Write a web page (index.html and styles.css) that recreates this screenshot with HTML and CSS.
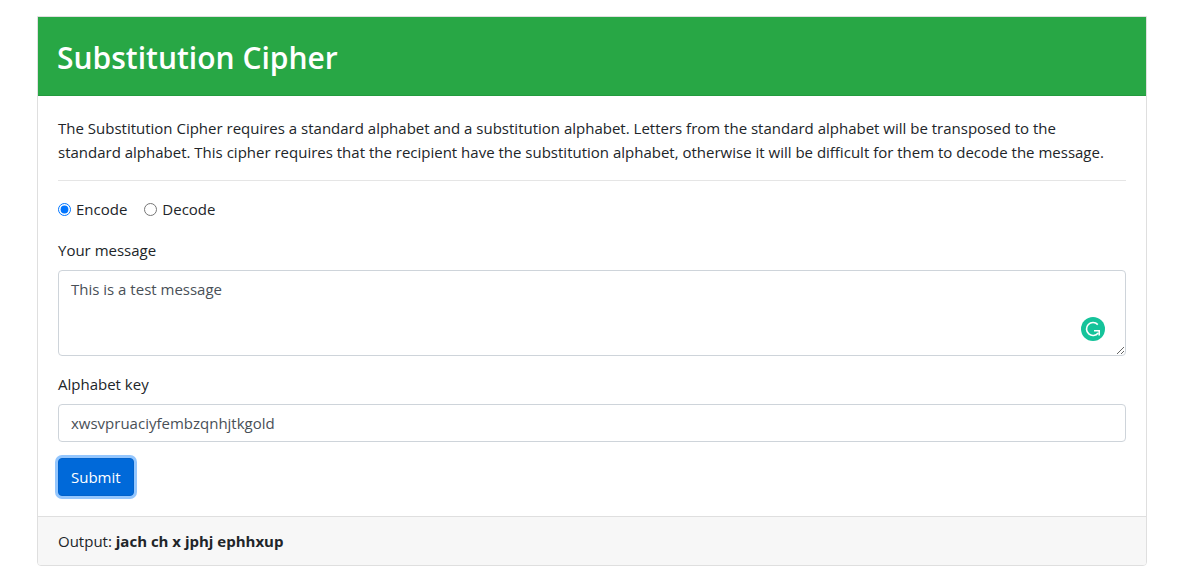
FILE: index.html
```html
<!DOCTYPE html>
<html lang="en">
<head>
<meta charset="utf-8">
<meta name="viewport" content="width=device-width, initial-scale=1">
<title>Substitution Cipher</title>
<link rel="stylesheet" href="styles.css">
</head>
<body>
<main class="card">
  <header class="card-header">
    <h1 class="title">Substitution Cipher</h1>
  </header>
  <form class="card-body">
    <p class="intro">The Substitution Cipher requires a standard alphabet and a substitution alphabet. Letters from the standard alphabet will be transposed to the<br>standard alphabet. This cipher requires that the recipient have the substitution alphabet, otherwise it will be difficult for them to decode the message.</p>
    <hr class="rule">
    <div class="modes">
      <label class="mode"><input class="radio" type="radio" name="mode" value="encode" checked>Encode</label>
      <label class="mode"><input class="radio" type="radio" name="mode" value="decode">Decode</label>
    </div>
    <div class="field">
      <label class="label" for="message">Your message</label>
      <div class="message-box">
        <textarea class="control message" id="message" rows="3">This is a test message</textarea>
        <svg class="checker" viewBox="0 0 24 24" aria-hidden="true">
          <circle cx="12" cy="12" r="12" fill="#15c39a"/>
          <path d="M16.8 7.6A6.5 6.5 0 1 0 17.2 15.9" fill="none" stroke="#fff" stroke-width="1.6"/>
          <path d="M13 13.8H18.2V18.6" fill="none" stroke="#fff" stroke-width="1.6"/>
        </svg>
      </div>
    </div>
    <div class="field">
      <label class="label" for="key">Alphabet key</label>
      <input class="control" id="key" type="text" value="xwsvpruaciyfembzqnhjtkgold">
    </div>
    <button class="submit" type="button">Submit</button>
  </form>
  <footer class="card-footer">Output: <strong class="result">jach ch x jphj ephhxup</strong></footer>
</main>
</body>
</html>
```
FILE: styles.css
```css
*, *::before, *::after { box-sizing: border-box; }
body {
  margin: 0;
  padding: 16px 38px 15px 37px;
  background: #fff;
  color: #212529;
  font-family: "Segoe UI", "Open Sans", "Noto Sans", sans-serif;
  font-size: 15px;
  line-height: 24px;
}
.card {
  border: 1px solid #dfdfdf;
  border-radius: 0 0 4px 4px;
  overflow: hidden;
}
.card-header {
  padding: 22px 19px 18px;
  background: #28a745;
  border-bottom: 1px solid #239a3e;
  color: #fff;
}
.title {
  margin: 0;
  font-size: 30px;
  font-weight: 600;
  line-height: 38px;
}
.card-body { padding: 20px; }
.intro { margin: 0 0 16px; }
.rule {
  margin: 0 0 16px;
  border: 0;
  border-top: 1px solid #e5e5e5;
}
.modes {
  display: flex;
  gap: 17px;
  margin-bottom: 17px;
}
.mode {
  display: flex;
  align-items: center;
  gap: 5px;
}
.radio {
  width: 13px;
  height: 13px;
  margin: 0;
  accent-color: #0075ff;
}
.field { margin-bottom: 16px; }
.label {
  display: block;
  margin-bottom: 8px;
}
.control {
  display: block;
  width: 100%;
  height: 38px;
  padding: 6px 12px;
  border: 1px solid #ced4da;
  border-radius: 4px;
  background: #fff;
  color: #495057;
  font: inherit;
}
.message-box { position: relative; }
.message {
  height: 86px;
  resize: vertical;
}
.checker {
  position: absolute;
  right: 21px;
  bottom: 15px;
  width: 24px;
  height: 24px;
}
.submit {
  display: block;
  height: 38px;
  padding: 6px 12px;
  border: 1px solid #0062cc;
  border-radius: 4px;
  background: #0069d9;
  box-shadow: 0 0 0 3px #94c6fd;
  color: #fff;
  font: inherit;
}
.card-footer {
  padding: 12px 20px;
  border-top: 1px solid #dfdfdf;
  background: #f7f7f7;
}
.result { font-weight: 700; }
```
